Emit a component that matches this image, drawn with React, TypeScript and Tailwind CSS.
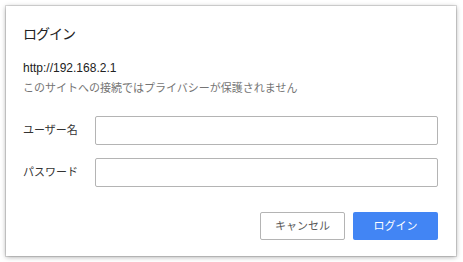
export default function App() {
  const font = {
    fontFamily: '"Liberation Sans", "Noto Sans CJK JP", sans-serif',
  };
  return (
    <div className="w-[463px] h-[262px] bg-white overflow-hidden" style={font}>
      <div className="ml-[6px] mt-[6px] w-[450px] h-[250px] bg-white shadow-[0_0_0_1px_rgba(0,0,0,0.12),0_1px_5px_rgba(0,0,0,0.35)] pt-[18px] pl-[17px] pr-[18px] flex flex-col">
        <h1 className="text-[14px] leading-[20px] text-[#222] tracking-[-1px]">ログイン</h1>
        <p className="mt-[16px] text-[12px] leading-[16px] text-[#222]">http://192.168.2.1</p>
        <p className="mt-[4px] text-[11px] leading-[16px] text-[#757575]">
          このサイトへの接続ではプライバシーが保護されません
        </p>
        <div className="mt-[20px] flex flex-col gap-[13px]">
          <div className="flex items-center">
            <label className="w-[72px] text-[11px] text-[#333]">ユーザー名</label>
            <input className="flex-1 h-[29px] border border-[#b4b4b4] rounded-[2px] outline-none px-2 text-[12px]" />
          </div>
          <div className="flex items-center">
            <label className="w-[72px] text-[11px] text-[#333]">パスワード</label>
            <input type="password" className="flex-1 h-[29px] border border-[#b4b4b4] rounded-[2px] outline-none px-2 text-[12px]" />
          </div>
        </div>
        <div className="mt-[25px] flex justify-end gap-[8px]">
          <button className="w-[85px] h-[28px] border border-[#b4b4b4] rounded-[2px] bg-white text-[11px] text-[#5a5a5a]">
            キャンセル
          </button>
          <button className="w-[85px] h-[28px] rounded-[2px] bg-[#4285f4] text-[11px] text-white">
            ログイン
          </button>
        </div>
      </div>
    </div>
  );
}
